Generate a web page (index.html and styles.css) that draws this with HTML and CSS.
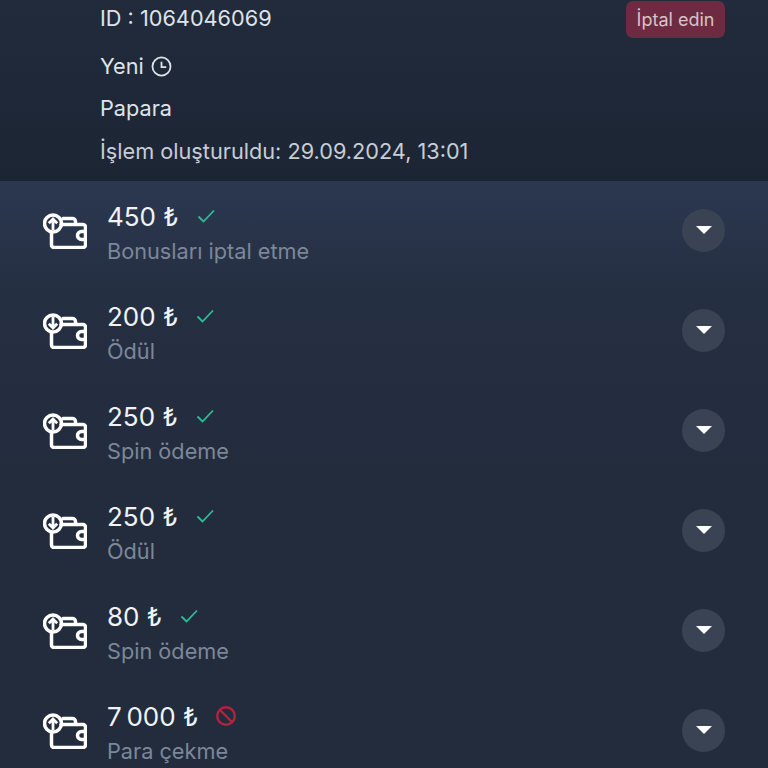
FILE: index.html
```html
<!DOCTYPE html>
<html lang="en">
<head>
  <meta charset="UTF-8" />
  <meta name="viewport" content="width=device-width, initial-scale=1.0"/>
  <title>İşlemler</title>
  <link rel="stylesheet" href="styles.css">
</head>
<body>
  <svg class="defs" width="0" height="0">
    <defs>
      <symbol id="wallet" viewBox="0 0 44 36">
        <path d="M20 5.500h9.500a3 3 0 0 1 3 3V11" class="line"/>
        <path d="M18 11.500h22a2.500 2.500 0 0 1 2.500 2.500v18a2.500 2.500 0 0 1-2.500 2.500H11a2.500 2.500 0 0 1-2.500-2.500V20" class="line"/>
        <path d="M42.500 18.500h-4a4 4 0 0 0 0 8h4" class="line"/>
        <circle cx="10" cy="10.500" r="8.500" class="line"/>
      </symbol>
      <symbol id="check" viewBox="0 0 20 20">
        <path d="M2.500 10.500l5 5L18 4.500" fill="none" stroke="#2dbd96" stroke-width="1.800"/>
      </symbol>
      <symbol id="blocked" viewBox="0 0 22 22">
        <circle cx="11" cy="11" r="8.800" fill="none" stroke="#b3223f" stroke-width="2.400"/>
        <path d="M5 5l12 12" stroke="#b3223f" stroke-width="2.400"/>
      </symbol>
    </defs>
  </svg>

  <!-- Request details -->
  <section class="details">
    <div class="details-top">
      <p class="detail-line">ID : 1064046069</p>
      <button class="cancel-btn" type="button">İptal edin</button>
    </div>
    <p class="detail-line status">Yeni
      <svg class="clock" viewBox="0 0 20 20"><circle cx="10" cy="10" r="8.600"/><path d="M10 5.500V10.500h4.500"/></svg>
    </p>
    <p class="detail-line">Papara</p>
    <p class="detail-line muted">İşlem oluşturuldu: 29.09.2024, 13:01</p>
  </section>

  <!-- Transactions -->
  <ul class="list">
    <li class="row">
      <svg class="wallet-icon" viewBox="0 0 44 36"><use href="#wallet"/><path d="M10 17V6M5.800 10.200L10 6l4.200 4.200" class="arrow"/></svg>
      <div class="info">
        <div class="amount"><span>450 ₺</span><svg class="state"><use href="#check"/></svg></div>
        <div class="label">Bonusları iptal etme</div>
      </div>
      <button class="expand" type="button"><i class="caret"></i></button>
    </li>
    <li class="row">
      <svg class="wallet-icon" viewBox="0 0 44 36"><use href="#wallet"/><path d="M10 4v11M5.800 10.800L10 15l4.200-4.200" class="arrow"/></svg>
      <div class="info">
        <div class="amount"><span>200 ₺</span><svg class="state"><use href="#check"/></svg></div>
        <div class="label">Ödül</div>
      </div>
      <button class="expand" type="button"><i class="caret"></i></button>
    </li>
    <li class="row">
      <svg class="wallet-icon" viewBox="0 0 44 36"><use href="#wallet"/><path d="M10 17V6M5.800 10.200L10 6l4.200 4.200" class="arrow"/></svg>
      <div class="info">
        <div class="amount"><span>250 ₺</span><svg class="state"><use href="#check"/></svg></div>
        <div class="label">Spin ödeme</div>
      </div>
      <button class="expand" type="button"><i class="caret"></i></button>
    </li>
    <li class="row">
      <svg class="wallet-icon" viewBox="0 0 44 36"><use href="#wallet"/><path d="M10 4v11M5.800 10.800L10 15l4.200-4.200" class="arrow"/></svg>
      <div class="info">
        <div class="amount"><span>250 ₺</span><svg class="state"><use href="#check"/></svg></div>
        <div class="label">Ödül</div>
      </div>
      <button class="expand" type="button"><i class="caret"></i></button>
    </li>
    <li class="row">
      <svg class="wallet-icon" viewBox="0 0 44 36"><use href="#wallet"/><path d="M10 17V6M5.800 10.200L10 6l4.200 4.200" class="arrow"/></svg>
      <div class="info">
        <div class="amount"><span>80 ₺</span><svg class="state"><use href="#check"/></svg></div>
        <div class="label">Spin ödeme</div>
      </div>
      <button class="expand" type="button"><i class="caret"></i></button>
    </li>
    <li class="row">
      <svg class="wallet-icon" viewBox="0 0 44 36"><use href="#wallet"/><path d="M10 17V6M5.800 10.200L10 6l4.200 4.200" class="arrow"/></svg>
      <div class="info">
        <div class="amount"><span>7&#8201;000 ₺</span><svg class="state state-large"><use href="#blocked"/></svg></div>
        <div class="label">Para çekme</div>
      </div>
      <button class="expand" type="button"><i class="caret"></i></button>
    </li>
  </ul>
</body>
</html>
```

FILE: styles.css
```css
* {
  box-sizing: border-box;
  margin: 0;
  padding: 0;
}
html, body {
  height: 768px;
  overflow: hidden;
}
body {
  background-color: #232c3d;
  color: #fff;
  font-family: Inter, "Liberation Sans", sans-serif;
}
.defs {
  display: block;
  height: 0;
}
.line {
  fill: none;
  stroke: #fff;
  stroke-width: 3.500;
  stroke-linecap: round;
  stroke-linejoin: round;
}
.arrow {
  fill: none;
  stroke: #fff;
  stroke-width: 2.800;
}

/* Details block */
.details {
  height: 181px;
  padding-left: 100px;
  padding-right: 43px;
  background: linear-gradient(#212b3c, #1c2534);
  color: #dfe3ea;
}
.details-top {
  height: 38px;
  display: flex;
  justify-content: space-between;
  align-items: center;
  margin-bottom: 9px;
}
.detail-line {
  font-size: 21.700px;
  line-height: 36px;
  height: 38px;
  margin-bottom: 5px;
}
.details-top .detail-line {
  margin-bottom: 0;
}
.status {
  display: flex;
  align-items: center;
  gap: 7px;
}
.clock {
  width: 21px;
  height: 21px;
  fill: none;
  stroke: #dfe3ea;
  stroke-width: 1.700;
}
.muted {
  color: #c8cdd6;
}
.cancel-btn {
  width: 99px;
  height: 37px;
  border: none;
  border-radius: 7px;
  background-color: #6e2a40;
  color: #d6c3c9;
  font-family: inherit;
  font-size: 18px;
}

/* Transaction rows */
.list {
  list-style: none;
  background: linear-gradient(#2b3850 0, #252f42 110px, #232c3d 300px);
}
.row {
  height: 100px;
  display: flex;
  align-items: center;
  padding: 0 43px 2px 43px;
}
.wallet-icon {
  width: 44px;
  height: 36px;
  flex: none;
  margin-top: 1px;
  overflow: visible;
}
.info {
  flex: 1;
  margin-left: 20px;
  padding-top: 7px;
}
.amount {
  display: flex;
  align-items: center;
  gap: 17px;
  font-size: 26px;
  line-height: 32px;
  color: #f1f3f6;
}
.state {
  width: 20px;
  height: 20px;
  margin-bottom: 2px;
}
.state-large {
  width: 22px;
  height: 22px;
}
.label {
  margin-top: 3px;
  font-size: 21.700px;
  line-height: 30px;
  color: #7c8799;
}
.expand {
  width: 43px;
  height: 43px;
  border: none;
  border-radius: 50%;
  background-color: #3a4354;
  display: flex;
  align-items: center;
  justify-content: center;
}
.caret {
  width: 0;
  height: 0;
  border-left: 8px solid transparent;
  border-right: 8px solid transparent;
  border-top: 8px solid #fff;
}
```
